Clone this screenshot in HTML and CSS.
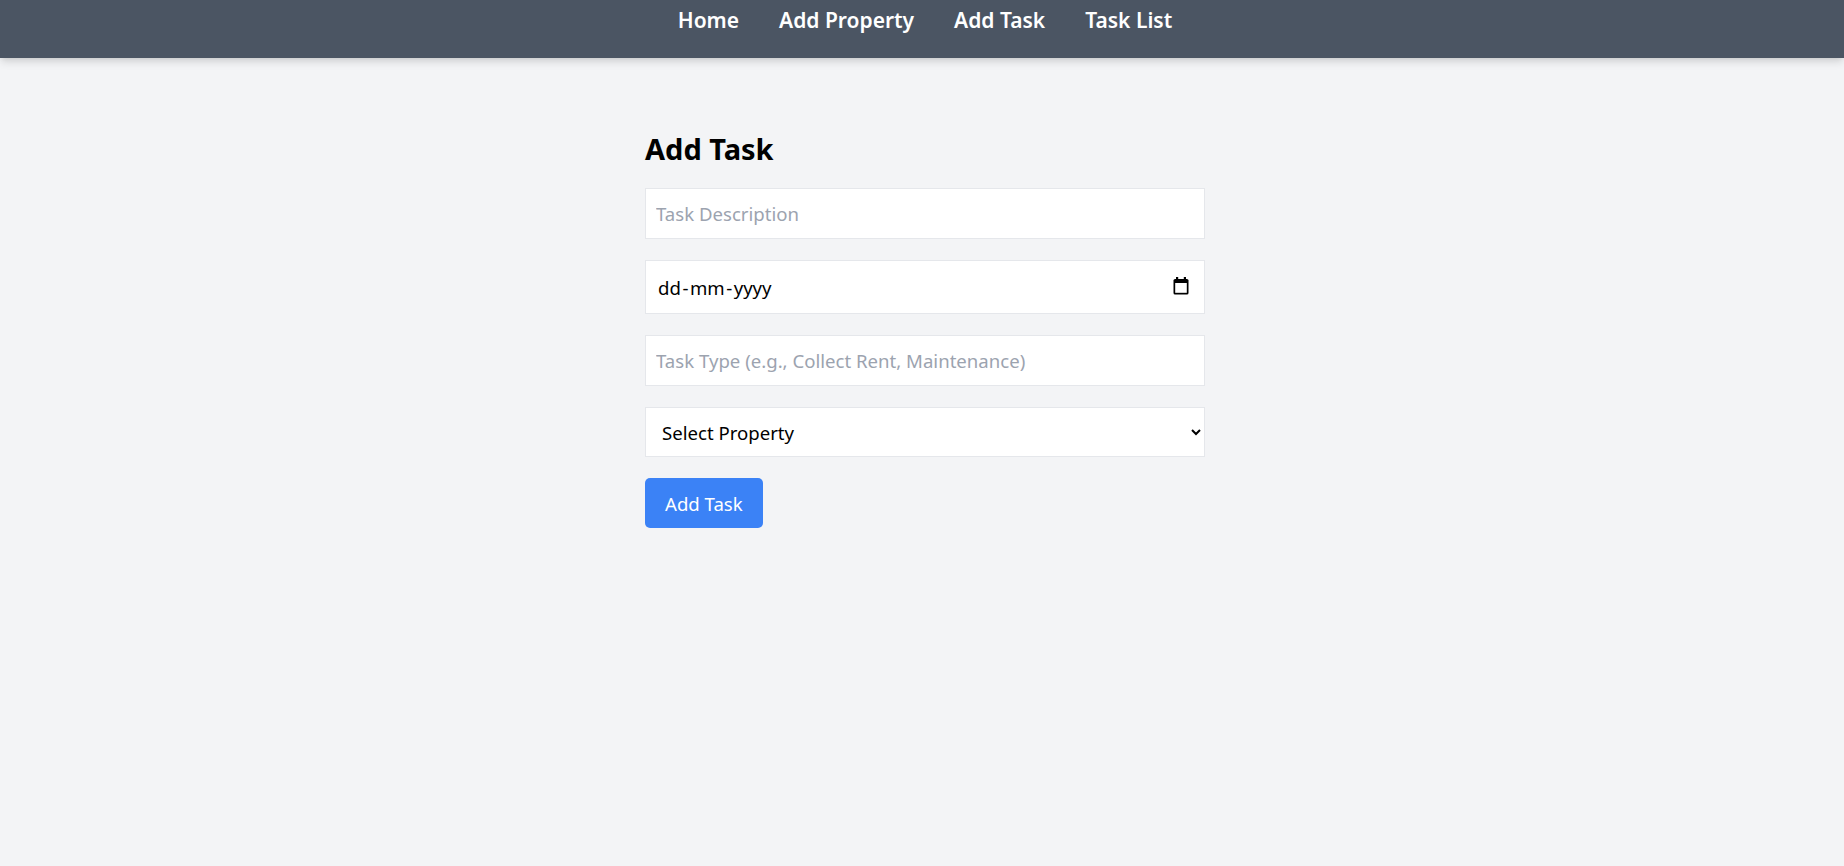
FILE: index.html
```html
<!DOCTYPE html>
<html lang="en">
<head>
<meta charset="utf-8">
<title>Add Task</title>
<link rel="stylesheet" href="styles.css">
</head>
<body>
<nav class="topnav">
  <ul class="nav-list">
    <li><a href="#" class="nav-link">Home</a></li>
    <li><a href="#" class="nav-link">Add Property</a></li>
    <li><a href="#" class="nav-link">Add Task</a></li>
    <li><a href="#" class="nav-link">Task List</a></li>
  </ul>
</nav>
<main class="container">
  <h2 class="title">Add Task</h2>
  <form class="task-form">
    <input type="text" class="field" placeholder="Task Description">
    <div class="field field-date" role="textbox" aria-label="Date">
      <span class="date-text">dd<span class="dash">-</span>mm<span class="dash">-</span>yyyy</span>
      <svg class="cal-icon" width="16" height="18" viewBox="0 0 16 18" aria-hidden="true">
        <rect x="3" y="0" width="2.2" height="4" fill="#000"/>
        <rect x="10.8" y="0" width="2.2" height="4" fill="#000"/>
        <rect x="0.5" y="2" width="15" height="15.5" rx="1.6" fill="#000"/>
        <rect x="2.2" y="6" width="11.6" height="9.8" fill="#fff"/>
      </svg>
    </div>
    <input type="text" class="field" placeholder="Task Type (e.g., Collect Rent, Maintenance)">
    <select class="field field-select">
      <option>Select Property</option>
    </select>
    <button type="button" class="btn">Add Task</button>
  </form>
</main>
</body>
</html>
```
FILE: styles.css
```css
html, body {
  margin: 0;
  padding: 0;
}
body {
  background: #f3f4f6;
  font-family: "Noto Sans", "Open Sans", sans-serif;
  color: #000;
  min-height: 866px;
}
.topnav {
  background: #4b5563;
  height: 58px;
  box-sizing: border-box;
  padding-top: 5px;
  box-shadow: 0 5px 8px -1px rgba(0, 0, 0, 0.12), 0 2px 5px -2px rgba(0, 0, 0, 0.1);
}
.nav-list {
  list-style: none;
  margin: 0;
  padding: 0 0 0 6px;
  display: flex;
  justify-content: center;
  gap: 40px;
}
.nav-link {
  display: block;
  color: #fff;
  text-decoration: none;
  font-weight: 600;
  font-size: 21px;
  line-height: 31px;
}
.container {
  width: 560px;
  margin: 0 auto;
  padding-top: 73px;
  padding-left: 6px;
}
.title {
  margin: 0 0 21px;
  font-size: 29px;
  font-weight: 700;
  line-height: 36px;
}
.task-form {
  display: flex;
  flex-direction: column;
  align-items: flex-start;
  gap: 21px;
}
.field {
  box-sizing: border-box;
  width: 560px;
  height: 51px;
  margin: 0;
  padding: 0 10px;
  border: 1px solid #e5e7eb;
  border-radius: 0;
  background: #fff;
  font-family: inherit;
  font-size: 18.6px;
  color: #000;
  outline: none;
}
.field::placeholder {
  color: #9ca3af;
}
.field-date {
  height: 54px;
  display: flex;
  align-items: center;
  justify-content: space-between;
  padding-left: 12px;
  padding-right: 15px;
}
.date-text {
  font-size: 18.6px;
}
.dash {
  padding: 0 1.5px;
}
.cal-icon {
  display: block;
  margin-top: -3px;
}
.field-select {
  height: 50px;
  padding-left: 12px;
}
.btn {
  height: 50px;
  padding: 0 20px;
  border: none;
  border-radius: 5px;
  background: #3b82f6;
  color: #fff;
  font-family: inherit;
  font-size: 18.6px;
  cursor: pointer;
}
```
